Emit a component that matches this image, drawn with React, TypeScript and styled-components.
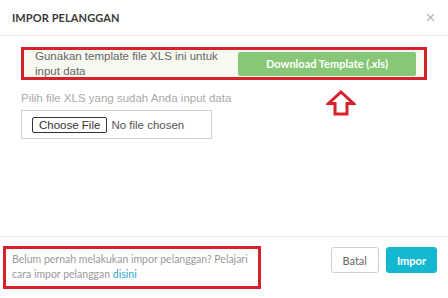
import React from "react";
import styled, { createGlobalStyle } from "styled-components";

const GlobalStyle = createGlobalStyle`
  html, body {
    margin: 0;
    padding: 0;
    background: #ffffff;
  }
  body {
    font-family: "Lato", "Open Sans", sans-serif;
    color: #333;
  }
`;

const Modal = styled.div`
  width: 448px;
  height: 298px;
  display: flex;
  flex-direction: column;
  background: #fff;
  box-sizing: border-box;
`;

const Header = styled.div`
  height: 35px;
  flex-shrink: 0;
  display: flex;
  align-items: center;
  justify-content: space-between;
  padding: 0 12px 0 12px;
  border-bottom: 1px solid #e6e6e6;
`;

const Title = styled.h4`
  margin: 0;
  font-size: 11px;
  font-weight: 700;
  letter-spacing: 0.1px;
  color: #3a3a3a;
`;

const Close = styled.button`
  border: none;
  background: none;
  padding: 0;
  width: 12px;
  height: 12px;
  display: flex;
  align-items: center;
  justify-content: center;
  cursor: pointer;
`;

const Body = styled.div`
  flex: 1;
  padding: 11px 21px 0 21px;
`;

const Annotated = styled.div<{ $pad?: string }>`
  border: 3px solid #d9212b;
  box-sizing: border-box;
  padding: ${(p) => p.$pad || "0"};
`;

const TemplateBox = styled.div`
  position: relative;
  display: flex;
  align-items: center;
  justify-content: space-between;
  background: #f5f9ef;
  height: 27px;
  padding: 0 8px 0 11px;
`;

const TemplateText = styled.span`
  font-family: "Liberation Sans", Arial, sans-serif;
  font-size: 11.5px;
  line-height: 15px;
  color: #666;
  width: 196px;
`;

const DownloadButton = styled.button`
  width: 178px;
  height: 24px;
  border: none;
  border-radius: 2px;
  background: #87c777;
  color: #fff;
  font-family: "Lato", sans-serif;
  font-weight: 700;
  font-size: 11px;
  cursor: pointer;
`;

const Arrow = styled.svg`
  position: absolute;
  left: 302px;
  top: 40px;
`;

const Field = styled.div`
  margin-top: 12px;
  display: flex;
  flex-direction: column;
  gap: 6px;
`;

const Label = styled.label`
  font-family: "Liberation Sans", Arial, sans-serif;
  font-size: 11.5px;
  color: #aaaaaa;
`;

const FileBox = styled.div`
  width: 191px;
  height: 29px;
  box-sizing: border-box;
  border: 1px solid #cfcfcf;
  display: flex;
  align-items: center;
  padding-left: 10px;

  input {
    font-family: "Liberation Sans", Arial, sans-serif;
    font-size: 11.5px;
    color: #555;
    width: 175px;
  }

  input::file-selector-button {
    font-family: "Liberation Sans", Arial, sans-serif;
    font-size: 11.5px;
    color: #333;
    background: #fff;
    border: 1px solid #333;
    border-radius: 2px;
    padding: 1px 6px;
    margin-right: 4px;
  }
`;

const Footer = styled.div`
  height: 62px;
  flex-shrink: 0;
  border-top: 1px solid #e6e6e6;
  display: flex;
  align-items: flex-start;
  justify-content: space-between;
  padding: 9px 11px 0 3px;
  box-sizing: border-box;
`;

const Hint = styled.p`
  margin: 0;
  width: 240px;
  font-size: 10.5px;
  line-height: 15px;
  color: #9a9a9a;

  a {
    color: #2aa6c4;
    text-decoration: none;
  }
`;

const Actions = styled.div`
  display: flex;
  gap: 7px;
  padding-top: 1px;
`;

const Button = styled.button<{ $primary?: boolean }>`
  height: 26px;
  padding: 0 ${(p) => (p.$primary ? 10 : 11)}px;
  border-radius: 3px;
  font-family: "Lato", sans-serif;
  font-size: 11px;
  font-weight: ${(p) => (p.$primary ? 700 : 400)};
  border: 1px solid ${(p) => (p.$primary ? "#14b7d0" : "#cfcfcf")};
  background: ${(p) => (p.$primary ? "#14b7d0" : "#fff")};
  color: ${(p) => (p.$primary ? "#fff" : "#666")};
  cursor: pointer;
`;

export default function App() {
  return (
    <>
      <GlobalStyle />
      <Modal>
        <Header>
          <Title>IMPOR PELANGGAN</Title>
          <Close aria-label="close">
            <svg width="9" height="9" viewBox="0 0 9 9">
              <path d="M1 1L8 8M8 1L1 8" stroke="#b5b5b5" strokeWidth="1.2" />
            </svg>
          </Close>
        </Header>
        <Body>
          <Annotated>
            <TemplateBox>
              <TemplateText>Gunakan template file XLS ini untuk input data</TemplateText>
              <DownloadButton>Download Template (.xls)</DownloadButton>
              <Arrow width="30" height="26" viewBox="0 0 30 26">
                <path
                  d="M15 2 L27.5 13.5 L21 13.5 L21 24 L9 24 L9 13.5 L2.5 13.5 Z"
                  fill="none"
                  stroke="#d9212b"
                  strokeWidth="3"
                  strokeLinejoin="miter"
                />
              </Arrow>
            </TemplateBox>
          </Annotated>
          <Field>
            <Label>Pilih file XLS yang sudah Anda input data</Label>
            <FileBox>
              <input type="file" />
            </FileBox>
          </Field>
        </Body>
        <Footer>
          <Annotated $pad="3px 6px 4px 6px">
            <Hint>
              Belum pernah melakukan impor pelanggan? Pelajari cara impor pelanggan <a href="#">disini</a>
            </Hint>
          </Annotated>
          <Actions>
            <Button>Batal</Button>
            <Button $primary>Impor</Button>
          </Actions>
        </Footer>
      </Modal>
    </>
  );
}
